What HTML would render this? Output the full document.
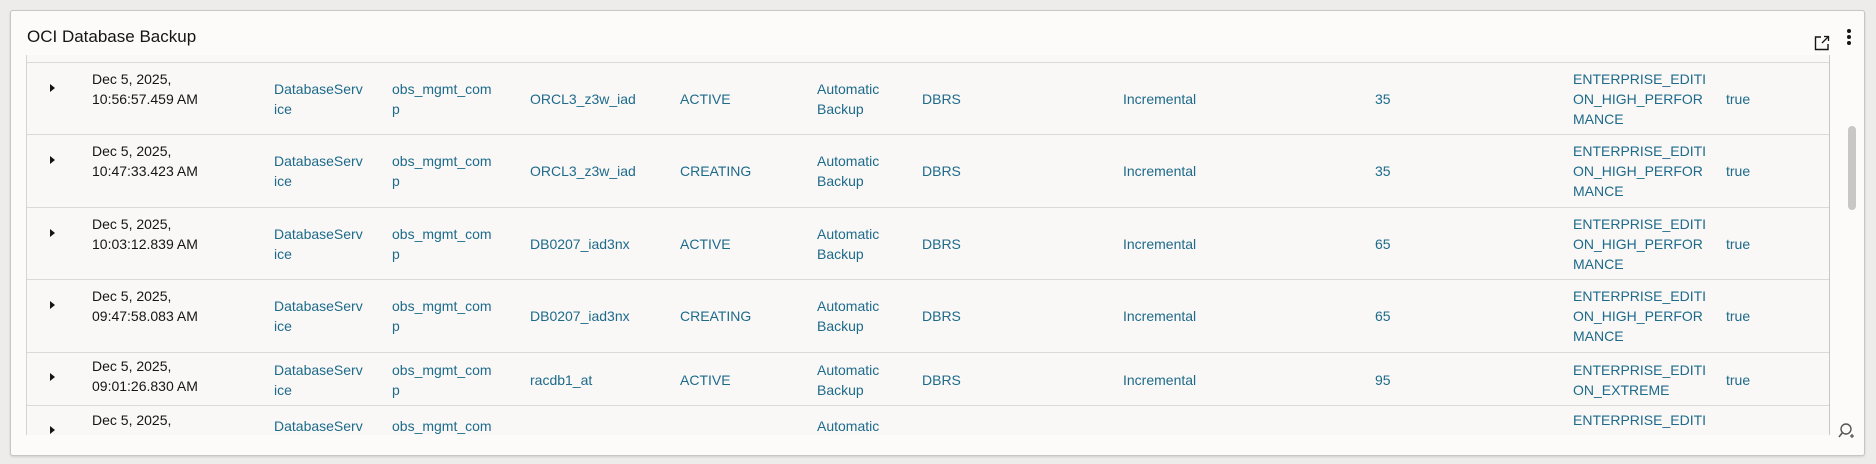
<!DOCTYPE html>
<html><head><meta charset="utf-8"><style>
html,body{margin:0;padding:0;width:1876px;height:464px;overflow:hidden;background:#eeecea;font-family:"Liberation Sans",sans-serif}
.card{position:absolute;left:10px;top:10px;width:1853px;height:444px;background:#fcfbfa;border:1px solid #c8c5c2;border-radius:3px;box-shadow:0 1px 2px rgba(0,0,0,.12)}
.title{position:absolute;left:27px;top:27px;font-size:17px;color:#161513}
.tbl{position:absolute;left:26px;top:55px;width:1802px;height:380px;background:#faf8f7;border-left:1px solid #d6d3d0;border-right:1px solid #c9c6c3;overflow:hidden}
.row{position:absolute;left:0;width:1802px;height:72px;border-top:1px solid #dcd9d6}
.c{position:absolute;top:0;height:72px;display:flex;align-items:center;font-size:14px;line-height:20px;color:#1d6a8a}
.r5 .c{height:53px}
.d{position:absolute;top:6px;font-size:14px;line-height:20px;color:#161513}
.caret{position:absolute;left:23px;top:21px;width:0;height:0;border-top:4px solid transparent;border-bottom:4px solid transparent;border-left:5px solid #161513}
.sb{position:absolute;left:1848px;top:126px;width:8px;height:84px;background:#c9c7c5;border-radius:4px}
</style></head><body>
<div class="card"></div>
<div class="title">OCI Database Backup</div>
<svg style="position:absolute;left:1814px;top:35px" width="16" height="16" viewBox="0 0 16 16"><path d="M7 2H1.5V14.5H14V9" fill="none" stroke="#161513" stroke-width="1.4"/><path d="M8 8L14.5 1.5M10 1.5H14.5V6" fill="none" stroke="#161513" stroke-width="1.3"/></svg>
<div style="position:absolute;left:1847px;top:29px;width:4px;height:4px;border-radius:2px;background:#161513;box-shadow:0 6px 0 #161513,0 12px 0 #161513"></div>
<div class="sb"></div>
<svg style="position:absolute;left:1837px;top:422px" width="18" height="18" viewBox="0 0 18 18"><circle cx="9" cy="7" r="5" fill="none" stroke="#555" stroke-width="1.4"/><path d="M5.5 10.5L2 15" stroke="#555" stroke-width="1.5"/><path d="M13 14h4M15 12v4" stroke="#555" stroke-width="1.3"/></svg>
<div class="tbl">
<div class="row" style="top:7px"><div class="caret"></div><div class="d" style="left:65px">Dec 5, 2025,<br>10:56:57.459 AM</div><div class="c" style="left:247px">DatabaseServ<br>ice</div><div class="c" style="left:365px">obs_mgmt_com<br>p</div><div class="c" style="left:503px">ORCL3_z3w_iad</div><div class="c" style="left:653px">ACTIVE</div><div class="c" style="left:790px">Automatic<br>Backup</div><div class="c" style="left:895px">DBRS</div><div class="c" style="left:1096px">Incremental</div><div class="c" style="left:1348px">35</div><div class="c" style="left:1546px">ENTERPRISE_EDITI<br>ON_HIGH_PERFOR<br>MANCE</div><div class="c" style="left:1699px">true</div></div>
<div class="row" style="top:79px"><div class="caret"></div><div class="d" style="left:65px">Dec 5, 2025,<br>10:47:33.423 AM</div><div class="c" style="left:247px">DatabaseServ<br>ice</div><div class="c" style="left:365px">obs_mgmt_com<br>p</div><div class="c" style="left:503px">ORCL3_z3w_iad</div><div class="c" style="left:653px">CREATING</div><div class="c" style="left:790px">Automatic<br>Backup</div><div class="c" style="left:895px">DBRS</div><div class="c" style="left:1096px">Incremental</div><div class="c" style="left:1348px">35</div><div class="c" style="left:1546px">ENTERPRISE_EDITI<br>ON_HIGH_PERFOR<br>MANCE</div><div class="c" style="left:1699px">true</div></div>
<div class="row" style="top:152px"><div class="caret"></div><div class="d" style="left:65px">Dec 5, 2025,<br>10:03:12.839 AM</div><div class="c" style="left:247px">DatabaseServ<br>ice</div><div class="c" style="left:365px">obs_mgmt_com<br>p</div><div class="c" style="left:503px">DB0207_iad3nx</div><div class="c" style="left:653px">ACTIVE</div><div class="c" style="left:790px">Automatic<br>Backup</div><div class="c" style="left:895px">DBRS</div><div class="c" style="left:1096px">Incremental</div><div class="c" style="left:1348px">65</div><div class="c" style="left:1546px">ENTERPRISE_EDITI<br>ON_HIGH_PERFOR<br>MANCE</div><div class="c" style="left:1699px">true</div></div>
<div class="row" style="top:224px"><div class="caret"></div><div class="d" style="left:65px">Dec 5, 2025,<br>09:47:58.083 AM</div><div class="c" style="left:247px">DatabaseServ<br>ice</div><div class="c" style="left:365px">obs_mgmt_com<br>p</div><div class="c" style="left:503px">DB0207_iad3nx</div><div class="c" style="left:653px">CREATING</div><div class="c" style="left:790px">Automatic<br>Backup</div><div class="c" style="left:895px">DBRS</div><div class="c" style="left:1096px">Incremental</div><div class="c" style="left:1348px">65</div><div class="c" style="left:1546px">ENTERPRISE_EDITI<br>ON_HIGH_PERFOR<br>MANCE</div><div class="c" style="left:1699px">true</div></div>
<div class="row r5" style="top:297px;height:53px"><div class="caret" style="top:20px"></div><div class="d" style="left:65px;top:3px">Dec 5, 2025,<br>09:01:26.830 AM</div><div class="c" style="left:247px">DatabaseServ<br>ice</div><div class="c" style="left:365px">obs_mgmt_com<br>p</div><div class="c" style="left:503px">racdb1_at</div><div class="c" style="left:653px">ACTIVE</div><div class="c" style="left:790px">Automatic<br>Backup</div><div class="c" style="left:895px">DBRS</div><div class="c" style="left:1096px">Incremental</div><div class="c" style="left:1348px">95</div><div class="c" style="left:1546px">ENTERPRISE_EDITI<br>ON_EXTREME</div><div class="c" style="left:1699px">true</div></div>
<div class="row" style="top:350px"><div class="caret" style="top:20px"></div><div class="d" style="left:65px;top:4px">Dec 5, 2025,<br>08:53:13.319 AM</div><div class="c" style="left:247px;top:-6px">DatabaseServ<br>ice</div><div class="c" style="left:365px;top:-6px">obs_mgmt_com<br>p</div><div class="c" style="left:790px;top:-6px">Automatic<br>Backup</div><div class="c" style="left:1546px;top:0px;align-items:flex-start;padding-top:4px">ENTERPRISE_EDITI<br>ON_HIGH_PERFOR<br>MANCE</div></div>
</div>
</body></html>
